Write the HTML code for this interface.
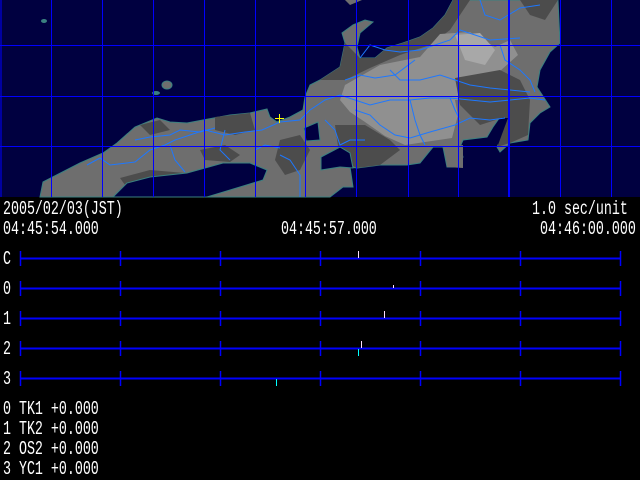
<!DOCTYPE html>
<html><head><meta charset="utf-8"><style>
html,body{margin:0;padding:0;background:#000;width:640px;height:480px;overflow:hidden}
.t{position:absolute;color:#fff;font-family:"Liberation Mono","Noto Sans CJK JP",monospace;font-size:19px;line-height:16px;white-space:pre;transform:scaleX(0.7);transform-origin:0 0}
.r{transform-origin:100% 0}
</style></head><body>
<svg width="640" height="480" style="position:absolute;left:0;top:0">
<rect x="0" y="0" width="640" height="197" fill="#000040"/>
<polygon fill="#6e6e6e" stroke="#3a8080" stroke-width="1" points="40,197 43,182 80,163 103,153 117,143 135,127 157,118 170,122 187,123 203,120 230,115 250,113 267,109 270,117 277,122 290,117 303,110 305,97 310,85 320,80 340,67 345,43 342,33 353,25 365,20 373,22 360,33 357,47 360,58 375,58 387,48 403,43 420,37 433,28 445,15 453,0 558,0 560,43 550,52 540,70 537,87 550,107 540,113 530,123 528,140 510,143 500,152 497,147 510,117 500,117 493,127 487,137 463,140 460,147 463,157 457,167 447,167 443,147 433,147 420,163 407,165 380,165 357,168 350,167 353,187 343,187 330,197"/>
<polygon fill="#4c4c4c" points="320,80 340,67 345,43 360,58 375,58 387,48 403,43 420,37 433,28 445,15 453,0 470,0 450,30 430,45 400,55 370,68 345,80"/>
<polygon fill="#909090" points="345,85 380,65 420,57 440,34 470,32 495,47 510,40 518,55 490,80 470,100 455,100 458,115 452,138 405,145 385,136 365,122 350,112 340,100"/>
<polygon fill="#a8a8a8" points="455,35 480,33 495,50 485,65 465,60"/>
<polygon fill="#4c4c4c" points="455,78 500,70 520,80 530,100 528,135 510,143 497,147 505,117 480,125 460,105"/>
<polygon fill="#4c4c4c" points="520,0 558,0 545,20 530,15"/>
<polygon fill="#4c4c4c" points="335,125 365,125 390,140 400,150 380,165 357,168 340,160"/>
<polygon fill="#4c4c4c" points="280,140 300,135 310,150 300,170 285,175 275,160"/>
<polygon fill="#4c4c4c" points="200,150 225,145 240,155 230,162 205,160"/>
<polygon fill="#4c4c4c" points="120,178 150,170 185,173 170,190 130,192"/>
<polygon fill="#4c4c4c" points="215,117 250,113 255,130 235,135 215,130"/>
<polygon fill="#4c4c4c" points="140,125 160,120 170,130 150,135"/>
<polygon fill="#000040" stroke="#3a8080" points="113,197 127,183 150,177 187,173 223,163 250,163 267,170 263,180 240,187 207,197"/>
<polygon fill="#000040" stroke="#3a8080" points="304,128 318,122 320,140 306,141"/>
<polygon fill="#000040" stroke="#3a8080" points="321,157 340,147 350,153 353,168 340,167 321,170"/>
<polygon fill="#000040" points="500,118 508,118 498,145 494,132"/>
<ellipse cx="167" cy="85" rx="5" ry="4" fill="#6e6e6e" stroke="#3a8080"/>
<ellipse cx="156" cy="93" rx="4" ry="2" fill="#3a8080"/>
<ellipse cx="44" cy="21" rx="3" ry="2" fill="#3a8080"/>
<polygon fill="#6e6e6e" points="345,0 362,0 350,5"/>
<polygon fill="#6e6e6e" points="445,147 463,145 463,168 447,167"/>
<g stroke="#1e78ff" stroke-width="1" fill="none">
<polyline points="87,165 100,158 110,165 135,162 150,150 165,145 175,140 190,135 205,130 225,135 245,132 262,130 280,122 300,120"/>
<polyline points="135,140 150,137 170,135 180,130 200,132 215,128"/>
<polyline points="170,145 175,160 185,172"/>
<polyline points="225,130 220,150 230,160"/>
<polyline points="300,120 310,110 325,100 340,95 355,100 370,105 390,100 410,100 430,98 450,98 470,100 490,102 510,100 530,98 545,100"/>
<polyline points="360,58 370,45 385,50 400,52 420,50 435,45 450,40 460,30 490,40 520,38"/>
<polyline points="390,70 400,80 420,80 440,75 455,80 470,85 490,88 510,90 530,92"/>
<polyline points="345,80 360,75 375,78 395,75 415,60"/>
<polyline points="355,110 370,115 380,125 395,135 410,138 430,132 455,125 470,118 490,120 505,118"/>
<polyline points="325,120 335,130 340,145 350,140 365,140"/>
<polyline points="410,100 415,120 420,135 425,145"/>
<polyline points="450,98 455,110 460,120"/>
<polyline points="500,45 505,60 520,70 530,80 535,92"/>
<polyline points="480,0 485,15 500,20 520,8 540,5"/>
<polyline points="280,155 290,160 300,175 300,197"/>
<polyline points="255,150 265,145 280,148"/>
</g>
<g stroke="#0000ff" stroke-width="1">
<line x1="1" y1="0" x2="1" y2="197"/>
<line x1="51.5" y1="0" x2="51.5" y2="197"/><line x1="102.5" y1="0" x2="102.5" y2="197"/>
<line x1="153.5" y1="0" x2="153.5" y2="197"/><line x1="204.5" y1="0" x2="204.5" y2="197"/>
<line x1="255.5" y1="0" x2="255.5" y2="197"/><line x1="305.5" y1="0" x2="305.5" y2="197"/>
<line x1="356.5" y1="0" x2="356.5" y2="197"/><line x1="408.5" y1="0" x2="408.5" y2="197"/>
<line x1="458.5" y1="0" x2="458.5" y2="197"/><line x1="509" y1="0" x2="509" y2="197" stroke-width="2"/>
<line x1="560.5" y1="0" x2="560.5" y2="197"/><line x1="611.5" y1="0" x2="611.5" y2="197"/>
<line x1="0" y1="45.5" x2="640" y2="45.5"/><line x1="0" y1="96.5" x2="640" y2="96.5"/>
<line x1="0" y1="146.5" x2="640" y2="146.5"/>
</g>
<g stroke="#ffff00"><line x1="275" y1="118.5" x2="284" y2="118.5"/><line x1="279.5" y1="114" x2="279.5" y2="123"/></g>
<g stroke="#0000ff" stroke-width="2">
<line x1="20" y1="258.5" x2="621" y2="258.5"/><line x1="20" y1="288.5" x2="621" y2="288.5"/>
<line x1="20" y1="318.5" x2="621" y2="318.5"/><line x1="20" y1="348.5" x2="621" y2="348.5"/>
<line x1="20" y1="378.5" x2="621" y2="378.5"/>
</g>
<g stroke="#0000ff" stroke-width="1.5">
<path d="M20.5 251v15M120.5 251v15M220.5 251v15M320.5 251v15M420.5 251v15M520.5 251v15M620.5 251v15
M20.5 281v15M120.5 281v15M220.5 281v15M320.5 281v15M420.5 281v15M520.5 281v15M620.5 281v15
M20.5 311v15M120.5 311v15M220.5 311v15M320.5 311v15M420.5 311v15M520.5 311v15M620.5 311v15
M20.5 341v15M120.5 341v15M220.5 341v15M320.5 341v15M420.5 341v15M520.5 341v15M620.5 341v15
M20.5 371v15M120.5 371v15M220.5 371v15M320.5 371v15M420.5 371v15M520.5 371v15M620.5 371v15"/>
</g>
<g stroke="#ffe0ff" stroke-width="1">
<line x1="358.5" y1="251" x2="358.5" y2="258"/><line x1="393.5" y1="285" x2="393.5" y2="288"/>
<line x1="384.5" y1="311" x2="384.5" y2="318"/><line x1="361.5" y1="341" x2="361.5" y2="348"/>
</g>
<g stroke="#00ffff" stroke-width="1">
<line x1="358.5" y1="349" x2="358.5" y2="356"/><line x1="276.5" y1="379" x2="276.5" y2="386"/>
</g>
</svg>
<div class="t" style="left:3px;top:201px">2005/02/03(JST)</div>
<div class="t r" style="right:12px;top:201px">1.0 sec/unit</div>
<div class="t" style="left:3px;top:221px">04:45:54.000</div>
<div class="t" style="left:281px;top:221px">04:45:57.000</div>
<div class="t r" style="right:4px;top:221px">04:46:00.000</div>
<div class="t" style="left:3px;top:251px">C</div>
<div class="t" style="left:3px;top:281px">0</div>
<div class="t" style="left:3px;top:311px">1</div>
<div class="t" style="left:3px;top:341px">2</div>
<div class="t" style="left:3px;top:371px">3</div>
<div class="t" style="left:3px;top:401px">0 TK1 +0.000</div>
<div class="t" style="left:3px;top:421px">1 TK2 +0.000</div>
<div class="t" style="left:3px;top:441px">2 OS2 +0.000</div>
<div class="t" style="left:3px;top:461px">3 YC1 +0.000</div>
</body></html>
